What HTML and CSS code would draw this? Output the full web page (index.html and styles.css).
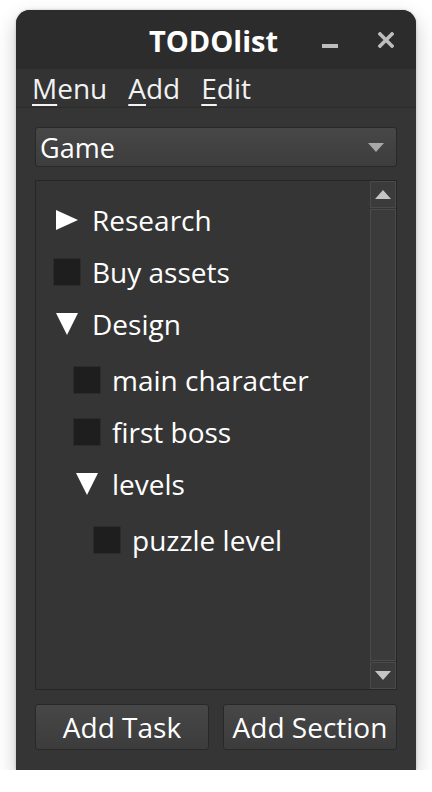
FILE: index.html
```html
<!DOCTYPE html>
<html>
<head>
<meta charset="utf-8">
<link rel="stylesheet" href="styles.css">
</head>
<body>
<div class="window">
  <div class="titlebar">
    <span class="title">TODOlist</span>
    <div class="controls">
      <span class="btn-min"></span>
      <svg class="btn-close" width="16" height="16" viewBox="0 0 16 16"><path d="M2 2 L14 14 M14 2 L2 14" stroke="#bdbdbd" stroke-width="3.6" stroke-linecap="square"/></svg>
    </div>
  </div>
  <div class="menubar">
    <span class="menu-item"><u>M</u>enu</span>
    <span class="menu-item"><u>A</u>dd</span>
    <span class="menu-item"><u>E</u>dit</span>
  </div>
  <div class="content">
    <div class="combo">
      <span class="combo-text">Game</span>
      <svg class="combo-arrow" width="16" height="9" viewBox="0 0 16 9"><path d="M0 0 H16 L8 9 Z" fill="#a8a8a8"/></svg>
    </div>
    <div class="tree">
      <div class="tree-list">
        <div class="row lvl0"><span class="icon"><svg width="22" height="20" viewBox="0 0 22 20"><path d="M0 0 L22 10 L0 20 Z" fill="#fff"/></svg></span><span class="label">Research</span></div>
        <div class="row lvl0"><span class="icon"><span class="check"></span></span><span class="label">Buy assets</span></div>
        <div class="row lvl0"><span class="icon"><svg width="22" height="22" viewBox="0 0 22 22"><path d="M0 0 H22 L11 22 Z" fill="#fff"/></svg></span><span class="label">Design</span></div>
        <div class="children">
          <div class="row lvl1"><span class="icon"><span class="check"></span></span><span class="label">main character</span></div>
          <div class="row lvl1"><span class="icon"><span class="check"></span></span><span class="label">first boss</span></div>
          <div class="row lvl1"><span class="icon"><svg width="22" height="22" viewBox="0 0 22 22"><path d="M0 0 H22 L11 22 Z" fill="#fff"/></svg></span><span class="label">levels</span></div>
          <div class="children">
            <div class="row lvl2"><span class="icon"><span class="check"></span></span><span class="label">puzzle level</span></div>
          </div>
        </div>
      </div>
      <div class="scrollbar">
        <div class="sb-btn"><svg width="16" height="9" viewBox="0 0 16 9"><path d="M0 9 H16 L8 0 Z" fill="#c4c4c4"/></svg></div>
        <div class="sb-trough"></div>
        <div class="sb-btn"><svg width="16" height="9" viewBox="0 0 16 9"><path d="M0 0 H16 L8 9 Z" fill="#c4c4c4"/></svg></div>
      </div>
    </div>
    <div class="buttons">
      <button class="push">Add Task</button>
      <button class="push">Add Section</button>
    </div>
  </div>
</div>
</body>
</html>
```
FILE: styles.css
```css
* { box-sizing: border-box; }
html, body { margin: 0; padding: 0; background: #ffffff; }
body { font-family: "Open Sans", "Noto Sans", sans-serif; color: #ffffff; }

.window {
  margin: 10px 16px 0 16px;
  width: 400px;
  height: 760px;
  background: #353535;
  border-radius: 14px 14px 0 0;
  box-shadow: 0 8px 20px rgba(0,0,0,0.22), 0 0 3px rgba(0,0,0,0.2);
  display: flex;
  flex-direction: column;
  overflow: hidden;
}

.titlebar {
  height: 59px;
  background: #2c2c2c;
  position: relative;
  display: flex;
  align-items: center;
  justify-content: center;
}
.title {
  font-weight: 700;
  font-size: 29px;
  line-height: 1;
  margin-right: 5px;
  margin-top: 2px;
}
.controls {
  position: absolute;
  right: 22px;
  top: 22px;
  display: flex;
  align-items: flex-end;
  gap: 40px;
  height: 16px;
}
.btn-min {
  width: 16px;
  height: 4px;
  background: #bdbdbd;
}
.btn-close { display: block; }

.menubar {
  height: 39px;
  background: #333333;
  border-bottom: 1px solid #2b2b2b;
  display: flex;
  align-items: center;
  padding-left: 16px;
  gap: 21px;
  font-size: 28px;
  color: #f2f2f2;
}
.menu-item { line-height: 1; }
.menu-item u { text-decoration-thickness: 2px; text-underline-offset: 5px; }

.content {
  flex: 1;
  display: flex;
  flex-direction: column;
  padding: 19px 19px 19px 19px;
}

.combo {
  height: 40px;
  border: 1px solid #282828;
  border-radius: 3px;
  background: linear-gradient(#474747, #3d3d3d);
  display: flex;
  align-items: center;
  justify-content: space-between;
  padding: 0 12px 0 4px;
}
.combo-text { font-size: 27px; line-height: 1; }

.tree {
  margin-top: 13px;
  height: 510px;
  border: 1px solid #262626;
  display: flex;
}
.tree-list {
  flex: 1;
  padding-top: 13px;
}
.row {
  height: 52px;
  display: flex;
  align-items: center;
  font-size: 28px;
}
.lvl0 { padding-left: 17px; }
.lvl1 { padding-left: 37px; }
.lvl2 { padding-left: 57px; }
.children { padding-top: 4px; }
.icon {
  width: 28px;
  height: 28px;
  display: flex;
  align-items: center;
  justify-content: center;
  margin-right: 11px;
}
.check {
  width: 28px;
  height: 28px;
  background: #1e1e1e;
  border: 1px solid #2c2c2c;
}
.label { line-height: 1; }

.scrollbar {
  width: 26px;
  display: flex;
  flex-direction: column;
  gap: 1px;
}
.sb-btn {
  height: 27px;
  background: #3b3b3b;
  border: 1px solid #4a4a4a;
  display: flex;
  align-items: center;
  justify-content: center;
}
.sb-trough {
  flex: 1;
  background: #3b3b3b;
  border: 1px solid #4a4a4a;
}

.buttons {
  margin-top: 14px;
  display: flex;
  gap: 14px;
}
.push {
  flex: 1;
  height: 46px;
  border: 1px solid #282828;
  border-radius: 3px;
  background: linear-gradient(#474747, #3c3c3c);
  color: #ffffff;
  font-family: "Open Sans", "Noto Sans", sans-serif;
  font-size: 28px;
  padding: 0;
  line-height: 1;
}
```
